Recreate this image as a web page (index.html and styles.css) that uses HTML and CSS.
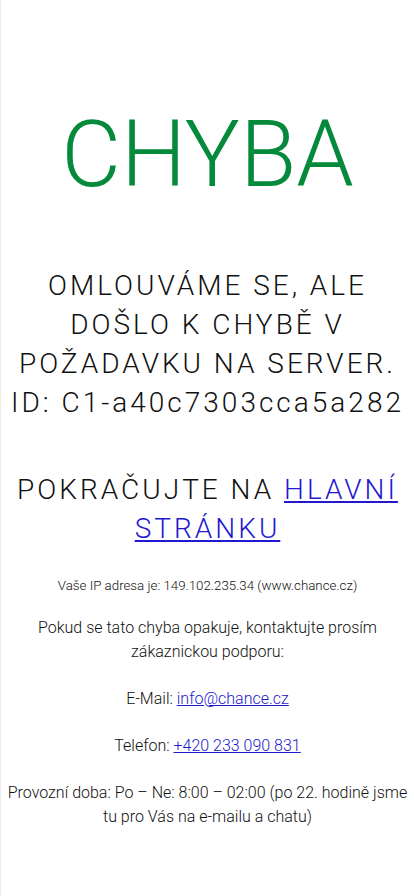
FILE: index.html
```html
<!DOCTYPE html>
<html lang="cs">
<head>
<meta charset="utf-8">
<title>Chyba</title>
<link rel="stylesheet" href="styles.css">
</head>
<body>
<div class="page">
  <h1 class="title">CHYBA</h1>
  <p class="lead">Omlouváme se, ale došlo k chybě v požadavku na server. <span class="id">ID: C1-a40c7303cca5a282</span></p>
  <p class="lead next">Pokračujte na <a href="#">hlavní stránku</a></p>
  <p class="ip">Vaše IP adresa je: 149.102.235.34 (www.chance.cz)</p>
  <p class="info">Pokud se tato chyba opakuje, kontaktujte prosím zákaznickou podporu:</p>
  <p class="info">E-Mail: <a href="#">info@chance.cz</a></p>
  <p class="info">Telefon: <a href="#">+420 233 090 831</a></p>
  <p class="info">Provozní doba: Po – Ne: 8:00 – 02:00 (po 22. hodině jsme tu pro Vás na e-mailu a chatu)</p>
</div>
</body>
</html>
```
FILE: styles.css
```css
html, body {
  margin: 0;
  padding: 0;
  background: #fff;
}
body {
  font-family: Roboto, "Noto Sans", sans-serif;
  font-weight: 300;
  color: #111;
}
.page {
  min-height: 896px;
  box-sizing: border-box;
  border-left: 1px solid #ececec;
  padding: 100px 4px 40px;
  text-align: center;
}
.title {
  margin: 0;
  font-size: 92px;
  font-weight: 300;
  line-height: 110px;
  color: #058a3c;
}
.lead {
  margin: 56px 0 0;
  font-size: 28px;
  line-height: 39px;
  letter-spacing: 3px;
  text-transform: uppercase;
}
.lead .id {
  text-transform: none;
}
.lead.next {
  margin-top: 48px;
}
.ip {
  margin: 29px 0 0;
  font-size: 13.3px;
  line-height: 18px;
}
.info {
  margin: 23px 0 0;
  font-size: 16px;
  line-height: 24px;
}
.ip + .info {
  margin-top: 21px;
}
a {
  color: #2218cf;
}
```
